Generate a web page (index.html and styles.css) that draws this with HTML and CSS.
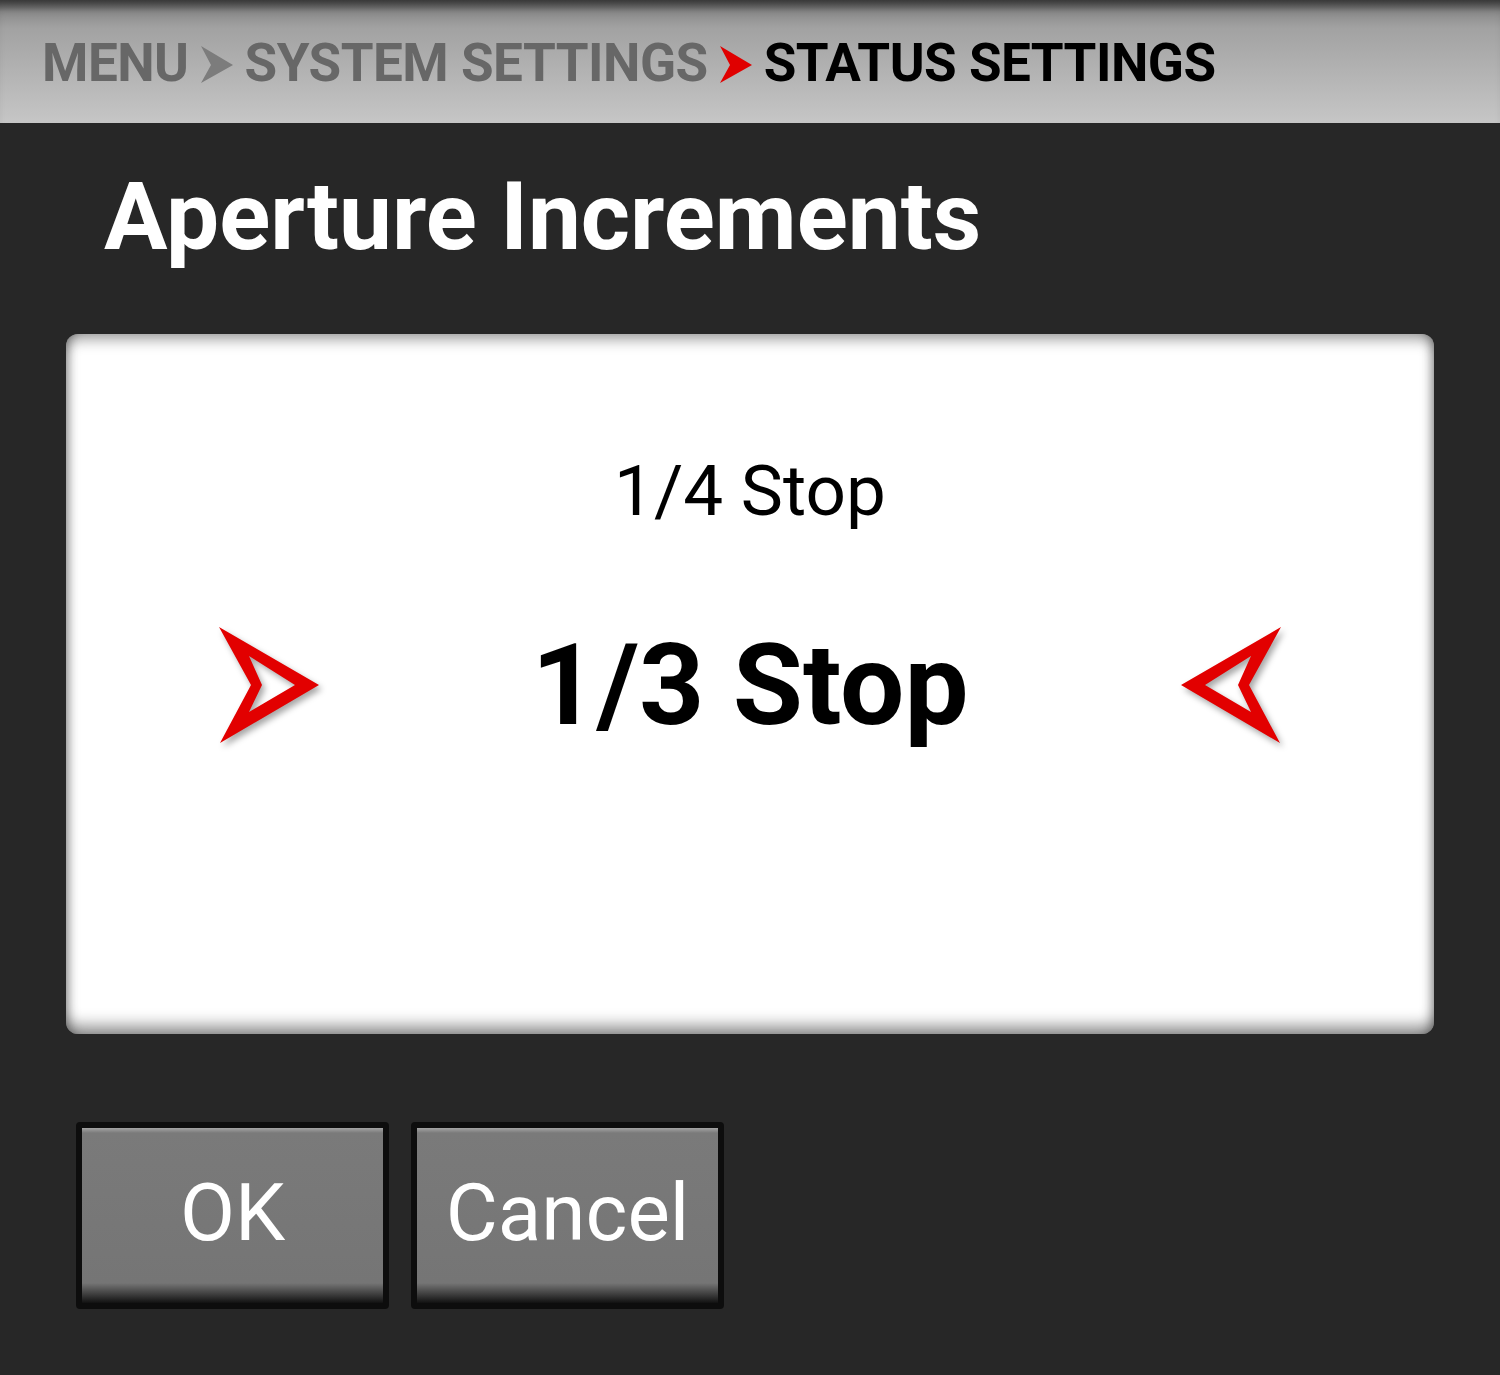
FILE: index.html
```html
<!DOCTYPE html>
<html lang="en">
<head>
    <meta charset="UTF-8">
    <meta name="viewport" content="width=device-width, initial-scale=1.0">
    <title>Aperture Increments</title>
    <link rel="stylesheet" href="styles.css">
</head>
<body>
    <div class="crumbs">
        <span class="crumb">MENU</span>
        <svg class="sep" viewBox="0 0 32 38"><polygon points="0,0 32,19 0,37 10,19" fill="#7c7c7c"/></svg>
        <span class="crumb">SYSTEM SETTINGS</span>
        <svg class="sep" viewBox="0 0 32 38"><polygon points="0,0 32,19 0,37 10,19" fill="#e00000"/></svg>
        <span class="crumb current">STATUS SETTINGS</span>
    </div>

    <h1 class="title">Aperture Increments</h1>

    <div class="picker">
        <div class="option">1/4 Stop</div>
        <div class="selected-row">
            <svg class="arrow" viewBox="0 0 102 118">
                <path fill="#e20000" fill-rule="evenodd"
                      d="M1 1 L101 59 L2 117 L33 59 Z M31 30 L77 59 L31 86 L44 59 Z"/>
            </svg>
            <div class="selected">1/3 Stop</div>
            <svg class="arrow" viewBox="0 0 102 118">
                <path fill="#e20000" fill-rule="evenodd"
                      d="M101 1 L1 59 L100 117 L69 59 Z M71 30 L25 59 L71 86 L58 59 Z"/>
            </svg>
        </div>
    </div>

    <div class="actions">
        <button class="btn">OK</button>
        <button class="btn">Cancel</button>
    </div>
</body>
</html>
```

FILE: styles.css
```css
* {
    margin: 0;
    padding: 0;
    box-sizing: border-box;
}

body {
    font-family: Roboto, 'Liberation Sans', sans-serif;
    background: #272727;
    width: 1500px;
    height: 1375px;
    overflow: hidden;
}

.crumbs {
    height: 123px;
    display: flex;
    align-items: center;
    padding: 4px 0 0 42px;
    background: linear-gradient(to bottom, #575757 0, #8c8c8c 12px, #a2a2a2 28px, #b2b2b2 70px, #c6c6c6 100%);
    box-shadow: inset 0 14px 12px -8px rgba(0, 0, 0, 0.4);
}

.crumb {
    font-size: 53px;
    font-weight: 700;
    line-height: 1;
    color: #676767;
    letter-spacing: -0.5px;
}

.crumb.current {
    color: #000;
}

.sep {
    width: 32px;
    height: 38px;
    margin: 2px 12px 0 12px;
}

.title {
    margin: 47px 0 0 104px;
    font-size: 94.5px;
    font-weight: 700;
    line-height: 1;
    color: #fff;
}

.picker {
    margin: 69px 66px 0;
    height: 700px;
    background: #fff;
    border-radius: 12px;
    padding-top: 121px;
    box-shadow:
        inset 0 12px 14px -6px rgba(0, 0, 0, 0.35),
        inset 0 -14px 16px -6px rgba(0, 0, 0, 0.45),
        inset 10px 0 12px -8px rgba(0, 0, 0, 0.35),
        inset -10px 0 12px -8px rgba(0, 0, 0, 0.35);
}

.option {
    text-align: center;
    font-size: 71px;
    line-height: 1;
    color: #000;
}

.selected-row {
    margin-top: 100px;
    height: 118px;
    display: flex;
    align-items: center;
    justify-content: space-between;
    padding: 0 152px;
}

.arrow {
    width: 102px;
    height: 118px;
    filter: drop-shadow(3px 4px 3px rgba(0, 0, 0, 0.35));
}

.selected {
    font-size: 114px;
    font-weight: 700;
    line-height: 1;
    color: #000;
}

.actions {
    display: flex;
    gap: 22px;
    margin: 88px 0 0 76px;
}

.btn {
    width: 313px;
    height: 187px;
    border: 6px solid #0d0d0d;
    border-radius: 4px;
    background: linear-gradient(to bottom, #a4a4a4 0, #7a7a7a 5px, #757575 calc(100% - 20px), #3a3a3a calc(100% - 8px), #111 100%);
    color: #fff;
    font-family: Roboto, 'Liberation Sans', sans-serif;
    font-size: 80px;
    line-height: 1;
    padding-bottom: 4px;
}
```
